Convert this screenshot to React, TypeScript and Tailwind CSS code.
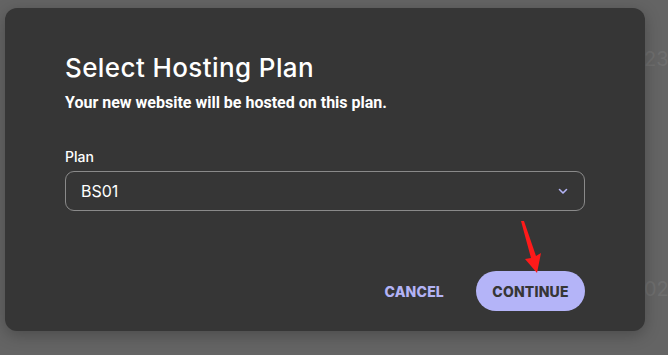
const ChevronDown = () => (
  <svg width="12" height="12" viewBox="0 0 12 12" fill="none" className="text-[#b3b3f5]">
    <path d="M2.5 4.5 6 8l3.5-3.5" stroke="currentColor" strokeWidth="1.6" strokeLinecap="round" strokeLinejoin="round" />
  </svg>
);

const App = () => {
  return (
    <div className="relative w-[668px] h-[355px] overflow-hidden bg-[#646464] pt-[8px] pl-[5px] font-['Inter',sans-serif]">
      {/* faint page text behind the backdrop */}
      <span className="absolute left-[644px] top-[44px] text-[20px] text-[#6e6e6e]">23</span>
      <span className="absolute left-[644px] top-[274px] text-[20px] text-[#6e6e6e]">023</span>

      <div className="relative w-[640px] h-[323px] rounded-[12px] bg-[#363636] shadow-[0_4px_16px_rgba(0,0,0,0.25)] px-[60px] pt-[44px] flex flex-col">
        <h2 className="text-[26px] leading-[32px] font-medium text-white tracking-[0.4px]">Select Hosting Plan</h2>
        <p className="mt-[9px] text-[16px] leading-[20px] font-bold text-white font-['Roboto',sans-serif]">
          Your new website will be hosted on this plan.
        </p>

        <label className="mt-[35px] text-[14px] leading-[18px] font-medium text-white">Plan</label>
        <div className="mt-[5px] h-[40px] w-[520px] rounded-[9px] border border-[#8a8a8a] flex items-center justify-between pl-[15px] pr-[15px]">
          <span className="text-[16px] text-white">BS01</span>
          <ChevronDown />
        </div>

        <div className="mt-auto mb-[20px] flex items-center justify-end">
          <button className="px-[16px] h-[40px] text-[14px] font-extrabold text-[#b3b3f5] tracking-[0.2px]">CANCEL</button>
          <button className="ml-[16px] w-[109px] h-[40px] rounded-full bg-[#b4b4f8] text-[14px] font-extrabold text-[#363636] tracking-[0.2px]">
            CONTINUE
          </button>
        </div>

        {/* red annotation arrow */}
        <svg className="absolute left-[505px] top-[205px]" width="40" height="65" viewBox="0 0 40 65">
          <polygon points="11,8 14,8 26,43 31,40 27,60 15,46 21,45" fill="#ff1a1a" />
        </svg>
      </div>
    </div>
  );
};

export default App;
